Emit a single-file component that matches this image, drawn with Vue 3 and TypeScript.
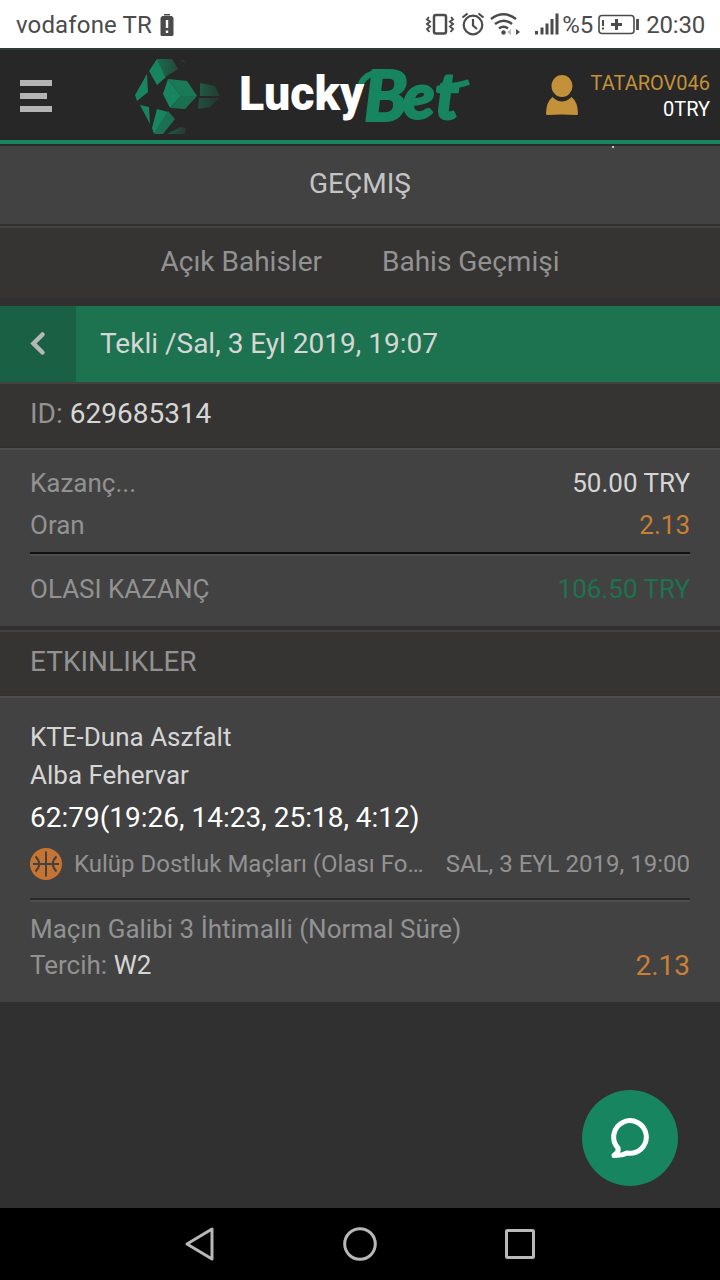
<script setup lang="ts">
interface Tab {
  label: string
}

const tabs: Tab[] = [{ label: 'Açık Bahisler' }, { label: 'Bahis Geçmişi' }]

const user = { name: 'TATAROV046', balance: '0TRY' }

const bet = {
  title: 'Tekli /Sal, 3 Eyl 2019, 19:07',
  id: '629685314',
  stake: '50.00 TRY',
  odds: '2.13',
  payout: '106.50 TRY',
}

const event = {
  home: 'KTE-Duna Aszfalt',
  away: 'Alba Fehervar',
  score: '62:79(19:26, 14:23, 25:18, 4:12)',
  league: 'Kulüp Dostluk Maçları (Olası Fo…',
  date: 'SAL, 3 EYL 2019, 19:00',
  market: 'Maçın Galibi 3 İhtimalli (Normal Süre)',
  pick: 'W2',
  odds: '2.13',
}
</script>

<template>
  <div class="screen">
    <div class="status">
      <span class="carrier">vodafone TR</span>
      <svg class="low" width="14" height="23" viewBox="0 0 14 23">
        <path d="M4 0h6v1.5H4z M2 2h10l1.500 2v16.500q0 1.500-1.500 1.500H2q-1.500 0-1.500-1.500V4z" fill="#4b4b4b" />
        <path d="M7 6v8M7 16.500v2.500" stroke="#fff" stroke-width="2.400" />
      </svg>
      <svg class="status-icons" width="134" height="26" viewBox="0 0 134 26" fill="none" stroke="#4b4b4b">
        <rect x="9" y="3" width="12" height="18.500" rx="2" stroke-width="2.500" />
        <path d="M4 5l-2 2.500 3 2-3 2.500 3 2.500-3 2.500 2.500 3M26 5l2 2.500-3 2 3 2.500-3 2.500 3 2.500-2.500 3" stroke-width="1.900" />
        <circle cx="48" cy="13" r="9.300" stroke-width="2.200" />
        <path d="M48 7v6.500l4 3.500M37.500 5.500l5-4M58.500 5.500l-5-4" stroke-width="2.200" />
        <path d="M66 7q12.500-9.500 25 0M70 12q8.500-6.500 17 0M74 16.500q4.500-3.500 9 0" stroke-width="2.500" />
        <circle cx="78.500" cy="20.500" r="2.200" fill="#4b4b4b" stroke="none" />
        <path d="M82 20l4-3v6z" fill="#bbb" stroke="none" />
        <path d="M95 20l-4-3v6z" fill="#4b4b4b" stroke="none" />
        <path d="M111.500 19v3.500M117 15.500v7M122 11.500v11M127 7v15.500M132 1.500v21" stroke-width="3" />
      </svg>
      <span class="percent">%5</span>
      <svg class="battery" width="42" height="22" viewBox="0 0 42 22" fill="none" stroke="#4b4b4b">
        <rect x="1" y="1.500" width="35" height="18" rx="3" stroke-width="1.600" />
        <path d="M5 6v6M5 13.500v2" stroke-width="2" />
        <path d="M13 10.500h11M18.500 5v11" stroke-width="3" />
        <path d="M39.500 5v11" stroke-width="2.800" />
      </svg>
      <span class="clock">20:30</span>
    </div>

    <header class="header">
      <svg class="menu" width="32" height="32" viewBox="0 0 32 32" fill="#b4b4b4">
        <path d="M0 0h32v6H0zM0 13h27v6H0zM0 26h32v6H0z" />
      </svg>
      <svg class="logo" width="350" height="88" viewBox="130 52 350 88">
        <defs>
          <linearGradient id="top-face" x1="0" y1="0" x2="1" y2="0">
            <stop offset="0" stop-color="#1b6a4e" />
            <stop offset="1" stop-color="#25483b" />
          </linearGradient>
          <linearGradient id="side-face" x1="0" y1="0" x2="1" y2="0">
            <stop offset="0" stop-color="#1e5b45" />
            <stop offset="1" stop-color="#26392f" />
          </linearGradient>
        </defs>
        <path d="M157 59l-8 12 8 14 9-8zM147 74l1 18-11 9-2-6zM140 105l9 2 1 17z" fill="#178560" />
        <path d="M157 59h15l6 10-13 8z" fill="url(#top-face)" />
        <path d="M168 79l-5 15 7 14 11-12z" fill="#178560" />
        <path d="M168 79l19 2 10 15h-16z" fill="#1a7a58" />
        <path d="M170 108l11-12h16l-12 13z" fill="#1a6f51" />
        <path d="M200 83l15 3 5 10h-20z" fill="url(#side-face)" />
        <path d="M199 98h20l-9 9-12 2z" fill="url(#side-face)" opacity=".8" />
        <path d="M157 109l-5 19 2 6 14-22z" fill="#178560" />
        <path d="M168 111l7 8-12 15h-9z" fill="#1c6f53" />
        <path d="M167 134l13-7 6 1-1 6z" fill="url(#side-face)" />
        <path d="M180 60l7 4-3-4z" fill="#27382f" />
        <path class="swash" d="M360 87C362 78 369 72 385 72M440 86Q454 87 469 82" />
        <text class="bet" y="121">
          <tspan x="364" class="cap">B</tspan><tspan x="403" dy="-2">e</tspan><tspan x="435">t</tspan>
        </text>
        <text class="lucky" x="239" y="110" textLength="125" lengthAdjust="spacingAndGlyphs">Lucky</text>
      </svg>
      <svg class="avatar" width="32" height="42" viewBox="0 0 32 42" fill="#c39139">
        <ellipse cx="16" cy="11" rx="10.500" ry="11" />
        <path d="M6.500 22q9.500 9 19 0Q32 27 32 39q0 1-1.500 1-14.500-.8-29 0Q0 40 0 39 0 27 6.500 22z" />
      </svg>
      <div class="user">
        <span class="name">{{ user.name }}</span>
        <span class="balance">{{ user.balance }}</span>
      </div>
    </header>

    <h1 class="page-title">GEÇMIŞ</h1>

    <nav class="tabs">
      <span v-for="tab in tabs" :key="tab.label">{{ tab.label }}</span>
    </nav>

    <div class="bet-bar">
      <div class="back">
        <svg width="16" height="26" viewBox="0 0 16 26">
          <path d="M12.500 3.500L3.500 12.500l9 9" fill="none" stroke="#b5b8b5" stroke-width="4.500" stroke-linecap="round" />
        </svg>
      </div>
      <div class="bet-title">{{ bet.title }}</div>
    </div>

    <div class="id-row"><span class="muted">ID: </span>{{ bet.id }}</div>

    <section class="summary">
      <div class="line"><span class="muted">Kazanç...</span><span>{{ bet.stake }}</span></div>
      <div class="line"><span class="muted">Oran</span><span class="orange">{{ bet.odds }}</span></div>
      <div class="rule dark"></div>
      <div class="line total"><span class="muted">OLASI KAZANÇ</span><span class="green">{{ bet.payout }}</span></div>
    </section>

    <h2 class="events-title">ETKINLIKLER</h2>

    <section class="event">
      <div class="team">{{ event.home }}</div>
      <div class="team">{{ event.away }}</div>
      <div class="score">{{ event.score }}</div>
      <div class="league-row">
        <svg width="32" height="32" viewBox="0 0 32 32">
          <circle cx="16" cy="16" r="16" fill="#c57431" />
          <path d="M16 3.500v25M3 16h26M5.500 8.500q7.500 7.500 0 15M26.500 8.500q-7.500 7.500 0 15" fill="none" stroke="#424242" stroke-width="2" />
        </svg>
        <span class="league">{{ event.league }}</span>
        <span class="date">{{ event.date }}</span>
      </div>
      <div class="rule"></div>
      <div class="market">{{ event.market }}</div>
      <div class="pick-row">
        <span><span class="muted">Tercih: </span>{{ event.pick }}</span>
        <span class="pick-odds">{{ event.odds }}</span>
      </div>
    </section>

    <div class="rest">
      <div class="chat">
        <svg width="42" height="42" viewBox="0 0 42 42" fill="none" stroke="#fff" stroke-width="5" stroke-linejoin="round">
          <path d="M9 31A16.300 16.300 0 1 1 18 36Q12.500 39 5 38.500 10 35.500 9 31z" />
        </svg>
      </div>
    </div>

    <footer class="android">
      <svg width="32" height="36" viewBox="0 0 32 36"><path d="M3 18L28 3v30z" /></svg>
      <svg width="34" height="36" viewBox="0 0 34 36"><circle cx="17" cy="18" r="15.300" /></svg>
      <svg width="32" height="36" viewBox="0 0 32 36"><rect x="2.500" y="4.500" width="27" height="27" rx="1" /></svg>
    </footer>
  </div>
</template>

<style>
body {
  margin: 0;
  background: #303030;
}
</style>

<style scoped>
.screen {
  width: 720px;
  height: 1280px;
  display: flex;
  flex-direction: column;
  overflow: hidden;
  background: #303030;
  color: #d6d6d6;
  font-family: Roboto, "Liberation Sans", sans-serif;
  font-size: 26px;
  white-space: pre;
}
.screen > * {
  box-sizing: border-box;
  flex-shrink: 0;
}
.status {
  height: 48px;
  background: #fff;
  color: #4b4b4b;
  display: flex;
  align-items: center;
  padding: 2px 15px 0 16px;
  font-size: 24px;
}
.carrier {
  letter-spacing: 0.15px;
}
.low {
  margin-left: 8px;
}
.status-icons {
  margin-left: auto;
}
.percent {
  margin-left: 3px;
}
.clock {
  letter-spacing: -0.2px;
}
.battery {
  margin: 0 6px 0 5px;
}
.header {
  height: 98px;
  background: #272727;
  border-top: 2px solid #303a36;
  border-bottom: 2px solid #2b2b2b;
  box-shadow: inset 0 -4px #178560;
  display: flex;
  align-items: flex-start;
  padding: 0 10px 0 20px;
}
.menu {
  margin-top: 30px;
}
.logo {
  margin: 2px 0 0 78px;
}
.lucky {
  font: 900 48px Roboto, sans-serif;
  fill: #fff;
}
.bet {
  font: italic 900 65px Lato, sans-serif;
  fill: #178560;
  stroke: #178560;
  stroke-width: 2;
  stroke-linejoin: round;
}
.cap {
  font-size: 70px;
}
.swash {
  fill: none;
  stroke: #178560;
  stroke-width: 6;
}
.avatar {
  margin: 25px 12px 0 66px;
}
.user {
  margin-left: auto;
  margin-top: 20px;
  display: flex;
  flex-direction: column;
  align-items: flex-end;
  font-size: 20px;
  line-height: 26px;
  color: #fff;
}
.name {
  color: #c39139;
}
.page-title {
  position: relative;
  margin: 0;
  height: 78px;
  background: #424242;
  color: #c4c4c4;
  font-size: 28px;
  font-weight: 400;
  line-height: 75px;
  text-align: center;
}
.page-title::after {
  content: "";
  position: absolute;
  top: 0;
  left: 612px;
  width: 2px;
  height: 2px;
  background: #c4c4c4;
}
.tabs {
  height: 74px;
  background: #353432;
  border-top: 2px solid #303030;
  box-shadow: inset 0 2px #424242;
  color: #929292;
  font-size: 28px;
  line-height: 71px;
  display: flex;
  justify-content: center;
  gap: 60px;
}
.bet-bar {
  margin-top: 8px;
  height: 76px;
  background: #1d7250;
  display: flex;
}
.back {
  width: 76px;
  background: #1a6045;
  display: flex;
  align-items: center;
  justify-content: center;
}
.bet-title {
  padding-left: 24px;
  font-size: 28px;
  line-height: 75px;
}
.id-row {
  height: 66px;
  background: #353432;
  border-top: 2px solid #424242;
  border-bottom: 2px solid #303030;
  padding-left: 30px;
  font-size: 28px;
  line-height: 60px;
}
.muted {
  color: #929292;
}
.summary {
  height: 178px;
  background: #424242;
  border-top: 2px solid #4e4e4e;
  padding: 12px 30px 0;
}
.line {
  display: flex;
  justify-content: space-between;
  line-height: 42px;
}
.orange,
.pick-odds {
  color: #c98035;
}
.green {
  color: #1d7250;
}
.rule {
  height: 2px;
  background: #292929;
  border-bottom: 2px solid #4e4e4e;
}
.rule.dark {
  margin-top: 6px;
  background: #111;
}
.total {
  line-height: 66px;
}
.events-title {
  margin: 4px 0 0;
  height: 66px;
  background: #353432;
  border-top: 2px solid #424242;
  border-bottom: 1px solid #303030;
  padding-left: 30px;
  color: #929292;
  font-size: 28px;
  font-weight: 400;
  line-height: 59px;
}
.event {
  height: 306px;
  background: #424242;
  border-top: 2px solid #4e4e4e;
  padding: 20px 30px 0;
}
.team {
  line-height: 38px;
}
.score {
  color: #fff;
  font-size: 28px;
  height: 46px;
  line-height: 48px;
}
.league-row {
  display: flex;
  align-items: center;
  height: 48px;
  color: #929292;
  font-size: 24px;
}
.league {
  margin-left: 12px;
}
.date {
  margin-left: auto;
}
.event .rule {
  margin-top: 10px;
}
.market {
  margin-top: 9px;
  color: #929292;
  line-height: 36px;
}
.pick-row {
  display: flex;
  justify-content: space-between;
  line-height: 36px;
}
.pick-odds {
  font-size: 28px;
  line-height: 38px;
}
.rest {
  height: 206px;
  padding: 88px 42px 0 0;
  display: flex;
  justify-content: flex-end;
}
.chat {
  width: 96px;
  height: 96px;
  border-radius: 50%;
  background: #178560;
  display: flex;
  align-items: center;
  justify-content: center;
}
.android {
  height: 72px;
  background: #000;
  display: flex;
  align-items: center;
  justify-content: space-between;
  padding: 0 184px;
}
.android svg {
  fill: none;
  stroke: #b8b8b8;
  stroke-width: 3;
  stroke-linejoin: round;
}
</style>
